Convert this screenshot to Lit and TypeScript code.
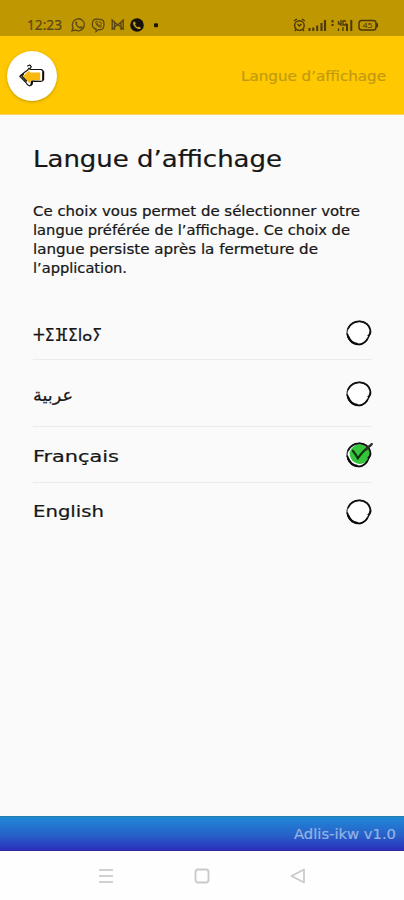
import { LitElement, html, svg, css } from "lit";
import { customElement, property } from "lit/decorators.js";

/** One line of text set to an exact advance width. */
@customElement("fit-text")
class FitText extends LitElement {
  @property() text = "";
  @property({ type: Number }) width = 100;
  @property({ type: Number }) height = 20;
  @property({ type: Number }) baseline = 15;
  static styles = css`
    :host { display: block; }
    svg { display: block; overflow: visible; }
    text { fill: currentColor; stroke: currentColor; stroke-width: 0.22px; direction: ltr; }
  `;
  render() {
    return html`<svg width=${this.width} height=${this.height}>
      <text x="0" y=${this.baseline} textLength=${this.width} lengthAdjust="spacingAndGlyphs">${this.text}</text>
    </svg>`;
  }
}

@customElement("sketch-radio")
class SketchRadio extends LitElement {
  @property({ type: Boolean }) checked = false;
  static styles = css`
    :host { display: block; width: 30px; height: 30px; }
    svg { display: block; overflow: visible; }
  `;
  render() {
    return html`<svg width="30" height="30" viewBox="0 0 30 30" fill="none" stroke-linecap="round">
      <path d="M14.5 3.4C21 2.8 26.5 7.5 26.6 13.6C26.8 15.5 26.2 17 25.1 17.8C23.8 22.6 19.5 26.8 14.8 26.6C8 26.3 3 21 3 14.8C3 8.8 8 3.8 14.5 3.4Z" fill="#fff" stroke="#333" stroke-width="1.1"/>
      ${this.checked ? svg`<path d="M15 4.2C21 4.2 26 8.5 25.9 14C25.4 20.5 21 24 15.5 24C9.5 23.2 5.5 19 5.6 12.8C7 8 10 4.6 15 4.2Z" fill="#35c43b"/>` : ""}
      <path d="M4.2 10.5C6.6 5.4 11 3.2 16 3.4C21 3.7 25.7 7 26.4 12.5Q27 15.5 25.4 17" stroke="#111" stroke-width="1.7"/>
      <path d="M3.3 16C4.8 22.6 9.6 26.5 14.8 26.4C18 26.3 21.2 24.2 23 21.5" stroke="#0b0b0b" stroke-width="1.7"/>
      <path d="M4.2 18.6C6 23 9.5 25.6 13 26" stroke="#0b0b0b" stroke-width="2.3"/>
      <path d="M26.4 13L25.2 16.8L24 17.5M25 18L23.2 21" stroke="#111" stroke-width="1.3"/>
      ${this.checked ? svg`<path d="M8.8 10.8Q11.5 14 13.8 18.3Q19 10.5 27.2 4.8" stroke="#12310f" stroke-width="2.1"/><path d="M22 9.6L27.8 4" stroke="#333" stroke-width="2.4"/>` : ""}
    </svg>`;
  }
}

const languages = [
  { name: "ⵜⵉⴼⵉⵏⴰⵢ", width: 69, baseline: 33, row: "r1", on: false },
  { name: "عربية", width: 40, baseline: 41, row: "r2", on: false },
  { name: "Français", width: 86, baseline: 34.5, row: "r3", on: true },
  { name: "English", width: 71, baseline: 33.5, row: "r4", on: false },
];

const paragraph: [string, number][] = [
  ["Ce choix vous permet de sélectionner votre", 327],
  ["langue préférée de l’affichage. Ce choix de", 317],
  ["langue persiste après la fermeture de", 285],
  ["l’application.", 94],
];

@customElement("app-root")
class AppRoot extends LitElement {
  static styles = css`
    :host {
      display: flex; flex-direction: column; width: 404px; height: 900px; overflow: hidden;
      background: #fafafa; color: #171717; font-family: "DejaVu Sans", "Noto Sans", sans-serif;
    }
    svg { display: block; overflow: visible; }
    .status {
      height: 36px; box-sizing: border-box; background: #bf9700; padding: 14px 25px 0 27px;
      display: flex; justify-content: space-between; color: #5c4816; flex: none;
    }
    .clock { font: 14px "Noto Sans", sans-serif; }
    .left { display: flex; gap: 8px; }
    .bar {
      height: 79px; flex: none; box-sizing: border-box; background: #ffc800; padding: 0 18px 0 7px;
      display: flex; align-items: center; justify-content: space-between; border-bottom: 1px solid #f5d468;
    }
    .back {
      width: 50px; height: 50px; border-radius: 50%; background: #fff; border: 0; padding: 0; margin-top: 1px;
      box-shadow: 0 1px 3px #8a6a0080; display: grid; place-items: center;
    }
    .bar fit-text { font-size: 13.5px; color: #c39b12; margin-top: 1px; }
    main { flex: 1; padding: 27px 32px 0 33px; }
    .title { font-size: 23px; }
    .para { margin-top: 26px; font-size: 13.2px; }
    ul { list-style: none; margin: 30px 0 0; padding: 0; }
    li { display: flex; justify-content: space-between; align-items: center; border-bottom: 1px solid #ebebeb; font-size: 16.5px; box-sizing: border-box; }
    li fit-text { align-self: flex-start; }
    li sketch-radio { margin-right: -1.5px; }
    .r1 { height: 52px; font-size: 17.5px; padding-bottom: 2px; }
    .r2 { height: 67px; font-size: 17px; padding-top: 2px; }
    .r3 { height: 56px; }
    .r4 { height: 57px; border: 0; }
    footer {
      height: 35px; flex: none; box-sizing: border-box; padding: 0 8px; display: flex; justify-content: flex-end;
      background: linear-gradient(#2088d6, #2761c9 55%, #2930bb); border-top: 1px solid #277fa5; border-bottom: 1px solid #3027a0;
      color: #94b3e4; font-size: 14px;
    }
    .r2 fit-text { margin-top: -2px; }
    nav { height: 49px; flex: none; background: #fefefe; display: flex; justify-content: center; gap: 80px; box-sizing: border-box; padding-top: 16px; }
  `;

  render() {
    return html`
      <div class="status">
        <div class="left">
          <fit-text class="clock" .text=${"12:23"} .width=${35} .height=${20} .baseline=${16}></fit-text>
          <svg width="94" height="22" fill="none" stroke="#5c4816" stroke-width="1.3">
            <path d="M2 16.8L3 13.5A6 6 0 1 1 5.4 16Z"/>
            <path d="M6 7.5Q7 7 7.4 8.8L6.8 10Q8 12.3 10 13L11.2 12L13 13Q12 15 10 14.5Q5.5 12.5 5.2 8.7Z" fill="#5c4816" stroke="none"/>
            <path d="M24 5.5Q28 4.8 32 5.8Q34 6.5 34 10Q34 14.5 31.5 15.3Q29 15.8 28 15.8L26 17.5V15Q22.3 14 22.3 10.5Q22.3 6.8 24 5.5Z"/>
            <path d="M25.5 8Q26 12 30.5 13.5L31.5 12L29.8 11L28.8 11.8L27.2 9.5L27.8 8.5L26.8 7ZM29 7.5Q31.5 8 31.5 10.5" stroke-width="1"/>
            <path d="M42.2 16V6L47.7 11L53.2 6V16M44.5 16V8.5M51 16V8.5M42.5 15L47 11M53 15L48.5 11" stroke-width="1.4"/>
            <circle cx="67" cy="11" r="6.8" fill="#17130a" stroke="none"/>
            <path d="M64.5 7.2L65.8 9.5L65 10.6Q66.2 13 68.2 13.3L69 12.6L71 13.9Q69.8 15.7 67.5 14.8Q63 12.5 63 8.8Z" fill="#c6a12a" stroke="none"/>
            <rect x="84" y="9.2" width="4" height="4" rx="1" fill="#1c1606" stroke="none"/>
          </svg>
        </div>
        <svg width="86" height="22" fill="none" stroke="#4b3908" stroke-width="1.4">
          <circle cx="6.4" cy="11.6" r="4.8"/><path d="M1 7L3.8 5M11.8 7L9 5M4.5 10L6.4 12L8.5 10M3 15.5L1.8 17M9.8 15.5L11 17"/>
          <path d="M16.5 14V17M20.3 13.5V17M24.2 11.5V17" stroke-width="2"/><path d="M28.5 9V17M32 6V17" stroke-width="2.1"/>
          <path d="M39.5 6V8.5M39.5 10V12" stroke-width="2"/>
          <path d="M45.5 7V10H48.4M48 6V12M53 7H50V11H53V9M45.5 14.5V17M50 13V17" stroke-width="1.3"/>
          <path d="M54 10V17M58.3 6V17" stroke-width="2"/>
          <rect x="66" y="6.5" width="17" height="9.5" rx="2.8" stroke-width="1.5"/><path d="M84 9.3V13.2" stroke-width="2"/>
          <text x="69.5" y="14" font-size="7" textLength="10" lengthAdjust="spacingAndGlyphs" font-family="Noto Sans" fill="#4b3908" stroke="none">45</text>
        </svg>
      </div>
      <header class="bar">
        <button class="back" aria-label="Retour">
          <svg width="28" height="26" viewBox="0 0 28 26" stroke-linecap="round" stroke-linejoin="round">
            <path d="M3 14L10 5.5L11.5 8H24V18H13.5L12 22.5Z" fill="#fff"/>
            <path d="M5 13.2L11 7.6L12.2 9.6H22.2V17.2H13.2L11.6 20.6Z" fill="#fbb90f"/>
            <path d="M12.5 6.5H23.5L25.5 8.5L25.3 16.5Q25 18.4 23 18.4L14.5 18.2L13.8 21.5L11.5 23Q9.5 22.4 7.5 19L1.8 13.3L6 9.7L9.7 7L11 5.2M5.5 11L3.8 13L8.5 18M9.6 3L11.8 2L13.3 3.6L11.7 6" fill="none" stroke="#17140d" stroke-width="1.2"/>
            <path d="M25.2 9V16.5M14 18.4L13.4 21.6" fill="none" stroke="#0d0b06" stroke-width="2"/>
          </svg>
        </button>
        <fit-text .text=${"Langue d’affichage"} .width=${145} .height=${22} .baseline=${16}></fit-text>
      </header>
      <main>
        <fit-text class="title" .text=${"Langue d’affichage"} .width=${249} .height=${34} .baseline=${25}></fit-text>
        <div class="para">
          ${paragraph.map(([t, w]) => html`<fit-text .text=${t} .width=${w} .height=${19} .baseline=${14}></fit-text>`)}
        </div>
        <ul>
          ${languages.map((l) => html`<li class=${l.row}>
            <fit-text .text=${l.name} .width=${l.width} .height=${l.row === "r1" ? 48 : 50} .baseline=${l.baseline}></fit-text>
            <sketch-radio .checked=${l.on}></sketch-radio>
          </li>`)}
        </ul>
      </main>
      <footer><fit-text .text=${"Adlis-ikw v1.0"} .width=${102} .height=${33} .baseline=${22}></fit-text></footer>
      <nav>
        <svg width="16" height="18"><path d="M1 3H15M1 9H15M1 15H15" stroke="#d0d0d0" stroke-width="2"/></svg>
        <svg width="16" height="18"><rect x="1.5" y="2.5" width="13" height="13" rx="2.5" fill="none" stroke="#c9c9c9" stroke-width="1.8"/></svg>
        <svg width="16" height="18"><path d="M1.5 9L14 2.5V15.5Z" fill="none" stroke="#c9c9c9" stroke-width="1.7" stroke-linejoin="round"/></svg>
      </nav>
    `;
  }
}
